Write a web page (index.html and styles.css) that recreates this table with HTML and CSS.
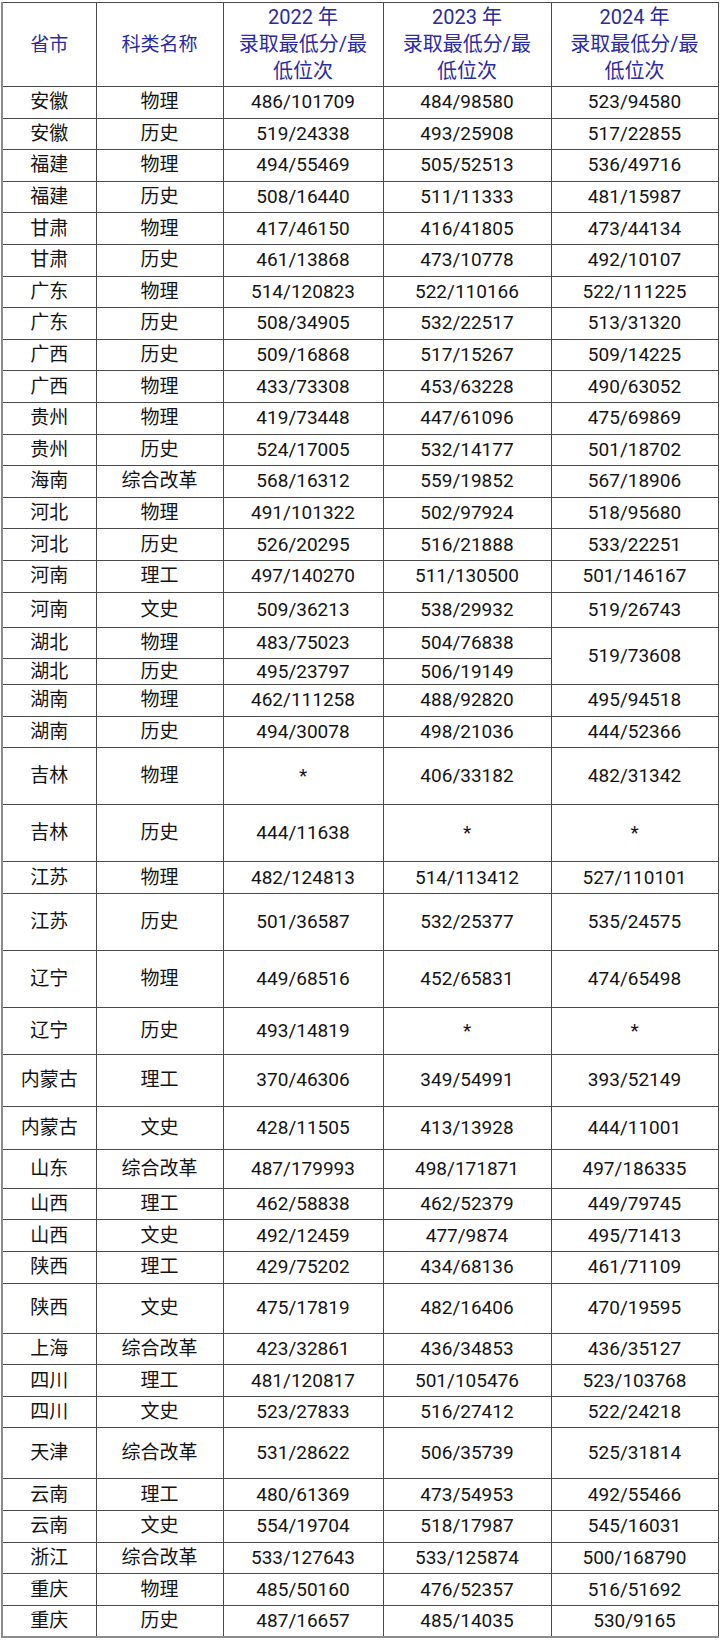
FILE: index.html
```html
<!DOCTYPE html>
<html lang="zh-CN">
<head>
<meta charset="utf-8">
<title>录取最低分/最低位次</title>
<link rel="stylesheet" href="styles.css">
</head>
<body>
<table class="score-table">
  <colgroup>
    <col class="c-prov">
    <col class="c-type">
    <col class="c-y22">
    <col class="c-y23">
    <col class="c-y24">
  </colgroup>
  <thead>
    <tr class="head-row">
      <th class="h-small">省市</th>
      <th class="h-small">科类名称</th>
      <th>2022 年<br>录取最低分/最<br>低位次</th>
      <th>2023 年<br>录取最低分/最<br>低位次</th>
      <th>2024 年<br>录取最低分/最<br>低位次</th>
    </tr>
  </thead>
  <tbody>
    <tr><td>安徽</td><td>物理</td><td>486/101709</td><td>484/98580</td><td>523/94580</td></tr>
    <tr><td>安徽</td><td>历史</td><td>519/24338</td><td>493/25908</td><td>517/22855</td></tr>
    <tr><td>福建</td><td>物理</td><td>494/55469</td><td>505/52513</td><td>536/49716</td></tr>
    <tr><td>福建</td><td>历史</td><td>508/16440</td><td>511/11333</td><td>481/15987</td></tr>
    <tr><td>甘肃</td><td>物理</td><td>417/46150</td><td>416/41805</td><td>473/44134</td></tr>
    <tr><td>甘肃</td><td>历史</td><td>461/13868</td><td>473/10778</td><td>492/10107</td></tr>
    <tr><td>广东</td><td>物理</td><td>514/120823</td><td>522/110166</td><td>522/111225</td></tr>
    <tr><td>广东</td><td>历史</td><td>508/34905</td><td>532/22517</td><td>513/31320</td></tr>
    <tr><td>广西</td><td>历史</td><td>509/16868</td><td>517/15267</td><td>509/14225</td></tr>
    <tr><td>广西</td><td>物理</td><td>433/73308</td><td>453/63228</td><td>490/63052</td></tr>
    <tr><td>贵州</td><td>物理</td><td>419/73448</td><td>447/61096</td><td>475/69869</td></tr>
    <tr><td>贵州</td><td>历史</td><td>524/17005</td><td>532/14177</td><td>501/18702</td></tr>
    <tr><td>海南</td><td>综合改革</td><td>568/16312</td><td>559/19852</td><td>567/18906</td></tr>
    <tr><td>河北</td><td>物理</td><td>491/101322</td><td>502/97924</td><td>518/95680</td></tr>
    <tr><td>河北</td><td>历史</td><td>526/20295</td><td>516/21888</td><td>533/22251</td></tr>
    <tr><td>河南</td><td>理工</td><td>497/140270</td><td>511/130500</td><td>501/146167</td></tr>
    <tr class="r35"><td>河南</td><td>文史</td><td>509/36213</td><td>538/29932</td><td>519/26743</td></tr>
    <tr><td>湖北</td><td>物理</td><td>483/75023</td><td>504/76838</td><td rowspan="2">519/73608</td></tr>
    <tr class="r26"><td>湖北</td><td>历史</td><td>495/23797</td><td>506/19149</td></tr>
    <tr><td>湖南</td><td>物理</td><td>462/111258</td><td>488/92820</td><td>495/94518</td></tr>
    <tr><td>湖南</td><td>历史</td><td>494/30078</td><td>498/21036</td><td>444/52366</td></tr>
    <tr class="r57"><td>吉林</td><td>物理</td><td>*</td><td>406/33182</td><td>482/31342</td></tr>
    <tr class="r57"><td>吉林</td><td>历史</td><td>444/11638</td><td>*</td><td>*</td></tr>
    <tr><td>江苏</td><td>物理</td><td>482/124813</td><td>514/113412</td><td>527/110101</td></tr>
    <tr class="r57"><td>江苏</td><td>历史</td><td>501/36587</td><td>532/25377</td><td>535/24575</td></tr>
    <tr class="r57"><td>辽宁</td><td>物理</td><td>449/68516</td><td>452/65831</td><td>474/65498</td></tr>
    <tr class="r47"><td>辽宁</td><td>历史</td><td>493/14819</td><td>*</td><td>*</td></tr>
    <tr class="r52"><td>内蒙古</td><td>理工</td><td>370/46306</td><td>349/54991</td><td>393/52149</td></tr>
    <tr class="r43"><td>内蒙古</td><td>文史</td><td>428/11505</td><td>413/13928</td><td>444/11001</td></tr>
    <tr class="r39"><td>山东</td><td>综合改革</td><td>487/179993</td><td>498/171871</td><td>497/186335</td></tr>
    <tr><td>山西</td><td>理工</td><td>462/58838</td><td>462/52379</td><td>449/79745</td></tr>
    <tr><td>山西</td><td>文史</td><td>492/12459</td><td>477/9874</td><td>495/71413</td></tr>
    <tr><td>陕西</td><td>理工</td><td>429/75202</td><td>434/68136</td><td>461/71109</td></tr>
    <tr class="r50"><td>陕西</td><td>文史</td><td>475/17819</td><td>482/16406</td><td>470/19595</td></tr>
    <tr><td>上海</td><td>综合改革</td><td>423/32861</td><td>436/34853</td><td>436/35127</td></tr>
    <tr><td>四川</td><td>理工</td><td>481/120817</td><td>501/105476</td><td>523/103768</td></tr>
    <tr><td>四川</td><td>文史</td><td>523/27833</td><td>516/27412</td><td>522/24218</td></tr>
    <tr class="r51"><td>天津</td><td>综合改革</td><td>531/28622</td><td>506/35739</td><td>525/31814</td></tr>
    <tr><td>云南</td><td>理工</td><td>480/61369</td><td>473/54953</td><td>492/55466</td></tr>
    <tr><td>云南</td><td>文史</td><td>554/19704</td><td>518/17987</td><td>545/16031</td></tr>
    <tr><td>浙江</td><td>综合改革</td><td>533/127643</td><td>533/125874</td><td>500/168790</td></tr>
    <tr><td>重庆</td><td>物理</td><td>485/50160</td><td>476/52357</td><td>516/51692</td></tr>
    <tr><td>重庆</td><td>历史</td><td>487/16657</td><td>485/14035</td><td>530/9165</td></tr>
  </tbody>
</table>
</body>
</html>
```

FILE: styles.css
```css
html, body {
  margin: 0;
  padding: 0;
  background: #ffffff;
}

body {
  padding: 2px 2px 0 1px;
  font-family: Roboto, "Noto Sans CJK SC", sans-serif;
  color: #141414;
}

.score-table {
  width: 716px;
  border-collapse: collapse;
  table-layout: fixed;
  border-top: 1px solid #333333;
  border-right: 1px solid #333333;
  border-left: 2px solid #8c8c8c;
  border-bottom: 2px solid #8c8c8c;
}

.c-prov { width: 94px; }
.c-type { width: 127px; }
.c-y22 { width: 160px; }
.c-y23 { width: 168px; }
.c-y24 { width: 167px; }

.score-table th,
.score-table td {
  border: 1px solid #4a4a4a;
  padding: 0;
  text-align: center;
  vertical-align: middle;
}

.score-table th {
  font-weight: normal;
  color: #2b2ba0;
  font-size: 20px;
  line-height: 27px;
}

.score-table th.h-small {
  font-size: 19px;
}

.head-row {
  height: 84px;
}

.score-table td {
  font-size: 19px;
  line-height: 22px;
}

.score-table tbody tr { height: 31.6px; }
.score-table tbody tr.r26 { height: 26px; }
.score-table tbody tr.r35 { height: 35px; }
.score-table tbody tr.r39 { height: 39px; }
.score-table tbody tr.r43 { height: 43px; }
.score-table tbody tr.r47 { height: 47px; }
.score-table tbody tr.r50 { height: 50px; }
.score-table tbody tr.r51 { height: 51px; }
.score-table tbody tr.r52 { height: 52px; }
.score-table tbody tr.r57 { height: 57px; }
```
